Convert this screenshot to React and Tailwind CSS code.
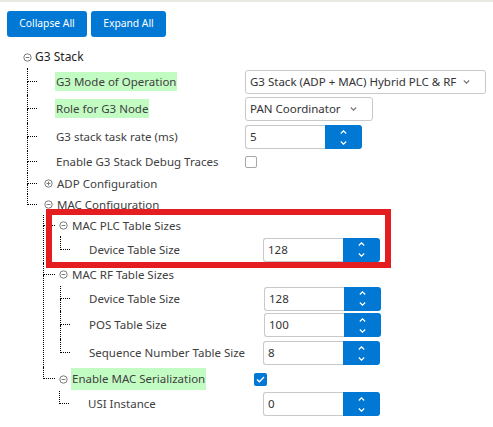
import React from "react";

const Minus = ({ plus }) => (
  <svg width="9" height="9" viewBox="0 0 9 9" className="shrink-0">
    <circle cx="4.5" cy="4.5" r="3.7" fill="none" stroke="#7a7a7a" strokeWidth="1" />
    <line x1="2.6" y1="4.5" x2="6.4" y2="4.5" stroke="#7a7a7a" strokeWidth="1" />
    {plus && <line x1="4.5" y1="2.6" x2="4.5" y2="6.4" stroke="#7a7a7a" strokeWidth="1" />}
  </svg>
);

const Chevron = ({ up, color = "#ffffff" }) => (
  <svg width="7" height="4" viewBox="0 0 7 4" className="shrink-0">
    <polyline
      points={up ? "0.8,3.5 3.5,0.8 6.2,3.5" : "0.8,0.5 3.5,3.2 6.2,0.5"}
      fill="none"
      stroke={color}
      strokeWidth="1.2"
    />
  </svg>
);

function Branch({ h, half, last, stub, row, children }) {
  return (
    <div className="flex">
      <div className={`flex shrink-0 flex-col ${stub}`}>
        <div className={`shrink-0 border-b border-l border-dotted border-black ${half}`} />
        {!last && <div className="flex-1 border-l border-dotted border-black" />}
      </div>
      <div className="flex min-w-0 flex-1 flex-col">
        <div className={`flex items-center ${h}`}>{row}</div>
        {children}
      </div>
    </div>
  );
}

function Leaf({ ml, w, label, green, children }) {
  return (
    <>
      <div className={`shrink-0 whitespace-nowrap ${ml} ${w}`}>
        <span className={green ? "bg-[#c3fcc3] px-[1px] py-[2px]" : "px-[1px]"}>{label}</span>
      </div>
      {children}
    </>
  );
}

function Node({ ml, label, green, plus }) {
  return (
    <div className={`flex items-center gap-[3px] whitespace-nowrap ${ml}`}>
      <Minus plus={plus} />
      <span className={green ? "bg-[#c3fcc3] px-[1px] py-[2px]" : "px-[1px]"}>{label}</span>
    </div>
  );
}

function Select({ w, text }) {
  return (
    <div
      className={`flex h-[24px] items-center justify-between rounded-[3px] border border-[#c9c9c9] bg-white pl-[4px] pr-[15px] whitespace-nowrap text-[#333] ${w}`}
    >
      <span>{text}</span>
      <Chevron color="#7a7a7a" />
    </div>
  );
}

function Spinner({ value }) {
  return (
    <div className="flex h-[24px]">
      <div className="flex w-[80px] items-center rounded-l-[3px] border border-r-0 border-[#c9c9c9] bg-white pl-[4px] text-[#333]">
        {value}
      </div>
      <div className="flex w-[37px] flex-col items-center justify-center gap-[7px] rounded-r-[3px] bg-[#0078d4]">
        <Chevron up />
        <Chevron />
      </div>
    </div>
  );
}

const Check = ({ checked }) =>
  checked ? (
    <div className="flex h-[13px] w-[13px] items-center justify-center rounded-[2px] bg-[#0078d4]">
      <svg width="9" height="7" viewBox="0 0 9 7">
        <polyline points="1,3.6 3.4,5.8 8,1" fill="none" stroke="#fff" strokeWidth="1.4" />
      </svg>
    </div>
  ) : (
    <div className="h-[12px] w-[12px] rounded-[2px] border border-[#a6a6a6] bg-white" />
  );

export default function App() {
  return (
    <div className="relative h-[427px] w-[493px] overflow-hidden bg-white font-['Noto_Sans',sans-serif] text-[11.5px] text-[#404040]">
      <div className="h-[2px] bg-[#e9e9e4]" />
      <div className="flex gap-[4px] pl-[7px] pt-[9px]">
        <button className="h-[26px] w-[80px] rounded-[3px] bg-[#0078d4] text-[10.3px] text-white">Collapse All</button>
        <button className="h-[26px] w-[75px] rounded-[3px] bg-[#0078d4] text-[10.3px] text-white">Expand All</button>
      </div>

      <div className="mt-[9px] pl-[23px]">
        <div className="flex h-[22px] items-center gap-[3px] text-[#1e1e1e]">
          <Minus />
          <span className="text-[12px]">G3 Stack</span>
        </div>
        <div className="ml-[4px]">
          <Branch
            h="h-[27px]"
            half="h-[14px]"
            stub="w-[10px]"
            row={
              <Leaf ml="ml-[18px]" w="w-[190px]" label="G3 Mode of Operation" green>
                <Select w="w-[241px]" text="G3 Stack (ADP + MAC) Hybrid PLC & RF" />
              </Leaf>
            }
          />
          <Branch
            h="h-[28px]"
            half="h-[14px]"
            stub="w-[10px]"
            row={
              <Leaf ml="ml-[18px]" w="w-[190px]" label="Role for G3 Node" green>
                <Select w="w-[128px]" text="PAN Coordinator" />
              </Leaf>
            }
          />
          <Branch
            h="h-[28px]"
            half="h-[14px]"
            stub="w-[10px]"
            row={
              <Leaf ml="ml-[18px]" w="w-[190px]" label="G3 stack task rate (ms)">
                <Spinner value="5" />
              </Leaf>
            }
          />
          <Branch
            h="h-[22px]"
            half="h-[11px]"
            stub="w-[10px]"
            row={
              <Leaf ml="ml-[18px]" w="w-[190px]" label="Enable G3 Stack Debug Traces">
                <Check />
              </Leaf>
            }
          />
          <Branch h="h-[21px]" half="h-[11px]" stub="w-[10px]" row={<Node ml="ml-[7px]" label="ADP Configuration" plus />} />
          <Branch h="h-[21px]" half="h-[11px]" stub="w-[10px]" last row={<Node ml="ml-[7px]" label="MAC Configuration" />}>
            <div className="ml-[6px]">
              <Branch h="h-[21px]" half="h-[11px]" stub="w-[12px]" row={<Node ml="ml-[4px]" label="MAC PLC Table Sizes" />}>
                <div className="ml-[5px]">
                  <Branch
                    h="h-[27px]"
                    half="h-[14px]"
                    stub="w-[10px]"
                    last
                    row={
                      <Leaf ml="ml-[18px]" w="w-[175px]" label="Device Table Size">
                        <Spinner value="128" />
                      </Leaf>
                    }
                  />
                </div>
              </Branch>
              <Branch h="h-[23px]" half="h-[12px]" stub="w-[12px]" row={<Node ml="ml-[4px]" label="MAC RF Table Sizes" />}>
                <div className="ml-[5px]">
                  <Branch
                    h="h-[25px]"
                    half="h-[13px]"
                    stub="w-[10px]"
                    row={
                      <Leaf ml="ml-[18px]" w="w-[176px]" label="Device Table Size">
                        <Spinner value="128" />
                      </Leaf>
                    }
                  />
                  <Branch
                    h="h-[28px]"
                    half="h-[14px]"
                    stub="w-[10px]"
                    row={
                      <Leaf ml="ml-[18px]" w="w-[176px]" label="POS Table Size">
                        <Spinner value="100" />
                      </Leaf>
                    }
                  />
                  <Branch
                    h="h-[28px]"
                    half="h-[14px]"
                    stub="w-[10px]"
                    last
                    row={
                      <Leaf ml="ml-[18px]" w="w-[175px]" label="Sequence Number Table Size">
                        <Spinner value="8" />
                      </Leaf>
                    }
                  />
                </div>
              </Branch>
              <Branch
                h="h-[24px]"
                half="h-[12px]"
                stub="w-[12px]"
                last
                row={
                  <>
                    <div className="w-[199px] shrink-0">
                      <Node ml="ml-[4px]" label="Enable MAC Serialization" green />
                    </div>
                    <Check checked />
                  </>
                }
              >
                <div className="ml-[4px]">
                  <Branch
                    h="h-[26px]"
                    half="h-[13px]"
                    stub="w-[10px]"
                    last
                    row={
                      <Leaf ml="ml-[18px]" w="w-[176px]" label="USI Instance">
                        <Spinner value="0" />
                      </Leaf>
                    }
                  />
                </div>
              </Branch>
            </div>
          </Branch>
        </div>
      </div>

      <div className="pointer-events-none absolute left-[46px] top-[209px] h-[59px] w-[345px] border-[6px] border-[#e41e20]" />
    </div>
  );
}
